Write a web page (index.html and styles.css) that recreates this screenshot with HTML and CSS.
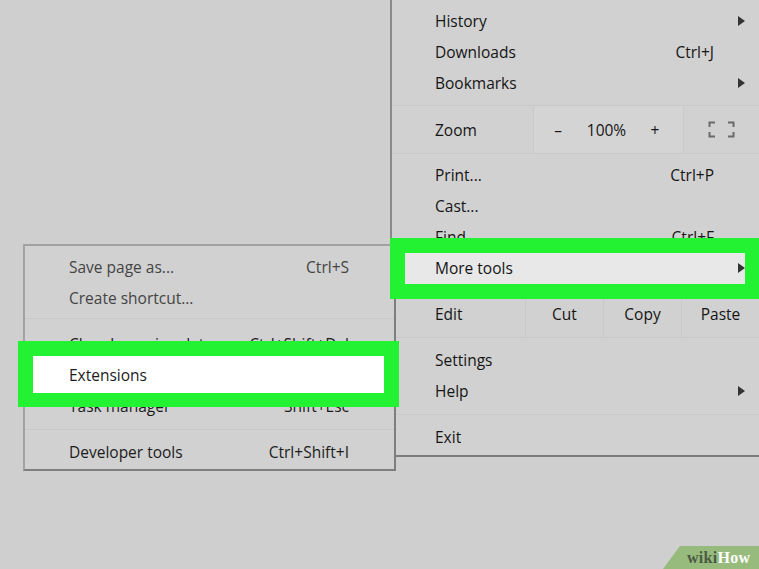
FILE: index.html
```html
<!DOCTYPE html>
<html>
<head>
<meta charset="utf-8">
<link rel="stylesheet" href="styles.css">
</head>
<body>
<div class="screen">
  <div class="menu main">
    <div class="item"><span class="label">History</span><span class="slot"><i class="arrow"></i></span></div>
    <div class="item"><span class="label">Downloads</span><span class="key">Ctrl+J</span><span class="slot"></span></div>
    <div class="item"><span class="label">Bookmarks</span><span class="slot"><i class="arrow"></i></span></div>
    <div class="sep sep-a"></div>
    <div class="item zoomrow">
      <span class="label zlabel">Zoom</span>
      <span class="zoomctl"><span class="zc">–</span><span class="zc">100%</span><span class="zc">+</span></span>
      <span class="fs">
        <svg width="27" height="17" viewBox="0 0 27 17"><path d="M1.5 6V1.5H7M20 1.5H25.5V6M1.5 11V15.5H7M20 15.5H25.5V11" fill="none" stroke="#6b6b6b" stroke-width="2"/></svg>
      </span>
    </div>
    <div class="sep sep-b"></div>
    <div class="item"><span class="label">Print...</span><span class="key">Ctrl+P</span><span class="slot"></span></div>
    <div class="item"><span class="label">Cast...</span><span class="slot"></span></div>
    <div class="item"><span class="label">Find...</span><span class="key">Ctrl+F</span><span class="slot"></span></div>
    <div class="item hl hl-main"><span class="label">More tools</span><span class="slot"><i class="arrow"></i></span></div>
    <div class="sep sep-c"></div>
    <div class="item editrow">
      <span class="label elabel">Edit</span>
      <span class="ec">Cut</span><span class="ec">Copy</span><span class="ec">Paste</span>
    </div>
    <div class="sep sep-d"></div>
    <div class="item"><span class="label">Settings</span><span class="slot"></span></div>
    <div class="item"><span class="label">Help</span><span class="slot"><i class="arrow"></i></span></div>
    <div class="sep sep-e"></div>
    <div class="item"><span class="label">Exit</span><span class="slot"></span></div>
  </div>

  <div class="menu sub">
    <div class="sitem dim"><span class="label">Save page as...</span><span class="key">Ctrl+S</span></div>
    <div class="sitem dim"><span class="label">Create shortcut...</span></div>
    <div class="sep sep-s1"></div>
    <div class="sitem"><span class="label">Clear browsing data...</span><span class="key">Ctrl+Shift+Del</span></div>
    <div class="sitem hl hl-sub"><span class="label">Extensions</span></div>
    <div class="sitem"><span class="label">Task manager</span><span class="key">Shift+Esc</span></div>
    <div class="sep sep-s2"></div>
    <div class="sitem"><span class="label">Developer tools</span><span class="key">Ctrl+Shift+I</span></div>
  </div>

  <div class="badge"><span class="wiki">wiki</span><span class="how">How</span></div>
</div>
</body>
</html>
```
FILE: styles.css
```css
html, body {
  margin: 0;
  padding: 0;
  background: #cfcfcf;
}
.screen {
  position: relative;
  width: 759px;
  height: 569px;
  overflow: hidden;
  background: #cfcfcf;
  font-family: "Open Sans", "Noto Sans", sans-serif;
  font-size: 15.5px;
  color: #151515;
}
.menu {
  position: absolute;
  background: #d1d1d1;
  box-sizing: border-box;
}
.main {
  left: 390px;
  top: 0;
  width: 369px;
  border-left: 2px solid #8a8a8a;
  border-bottom: 2px solid #7c7c7c;
  padding-top: 6px;
  padding-bottom: 2px;
}
.item {
  display: flex;
  align-items: center;
  height: 31px;
  padding: 0 14px 1px 43px;
  box-sizing: border-box;
  white-space: nowrap;
}
.label { flex: 1; }
.key { text-align: right; }
.slot {
  width: 31px;
  display: flex;
  justify-content: flex-end;
  align-items: center;
}
.arrow {
  display: block;
  width: 0;
  height: 0;
  border-left: 7px solid #333;
  border-top: 5px solid transparent;
  border-bottom: 5px solid transparent;
}
.sep { height: 1px; background: #c8c8c8; }
.sep-a { margin-top: 6px; }
.sep-b { margin-bottom: 6px; }
.sep-c { margin-top: 6px; }
.sep-d { margin-bottom: 7px; }
.sep-e { margin: 7px 0; }

.zoomrow {
  height: 47px;
  padding-right: 0;
  padding-bottom: 0;
  align-items: stretch;
}
.zlabel {
  flex: 0 0 98px;
  display: flex;
  align-items: center;
}
.zoomctl {
  display: flex;
  width: 151px;
  box-sizing: border-box;
  padding-right: 4px;
  background: #d4d4d4;
  border-left: 1px solid #cacaca;
  border-right: 1px solid #cacaca;
}
.zc {
  width: 49px;
  display: flex;
  align-items: center;
  justify-content: center;
}
.fs {
  flex: 1;
  display: flex;
  align-items: center;
  justify-content: center;
}

.editrow {
  height: 46px;
  padding-right: 0;
  padding-bottom: 0;
  align-items: stretch;
}
.elabel {
  flex: 0 0 90px;
  display: flex;
  align-items: center;
}
.ec {
  width: 78px;
  display: flex;
  align-items: center;
  justify-content: center;
  border-left: 1px solid #c9c9c9;
  box-sizing: border-box;
}

.sub {
  left: 23px;
  top: 244px;
  width: 373px;
  border-top: 2px solid #a2a2a2;
  border-left: 2px solid #a2a2a2;
  border-right: 2px solid #7e7e7e;
  border-bottom: 2px solid #7e7e7e;
  padding-top: 6px;
  padding-bottom: 1px;
}
.sitem {
  display: flex;
  align-items: center;
  height: 31px;
  padding: 0 45px 1px 44px;
  box-sizing: border-box;
  white-space: nowrap;
  color: #1c1c1c;
}
.sitem.dim { color: #444; }
.sep-s1 { margin: 4px 0 10px; }
.sep-s2 { margin: 7px 0; }

.hl {
  position: relative;
  z-index: 3;
}
.hl::before {
  content: "";
  position: absolute;
  z-index: -1;
  border: 15px solid #22f232;
}
.hl-main::before {
  left: -2px;
  right: 0;
  top: -15px;
  bottom: -15px;
  border-right-width: 14px;
  background: #e8e8e8;
}
.hl-sub::before {
  left: -7px;
  right: -5px;
  top: -19px;
  bottom: -16px;
  border-bottom-width: 14px;
  background: #ffffff;
}

.badge {
  position: absolute;
  right: 0;
  bottom: 0;
  width: 96px;
  height: 23px;
  background: #97bb7c;
  clip-path: polygon(17px 0, 100% 0, 100% 100%, 0 100%);
  box-sizing: border-box;
  padding-left: 24px;
  font-family: "Liberation Serif", "DejaVu Serif", serif;
  font-weight: bold;
  font-size: 16px;
  line-height: 24px;
  letter-spacing: 0.3px;
}
.wiki { color: #4b5a45; }
.how { color: #ffffff; }
```
